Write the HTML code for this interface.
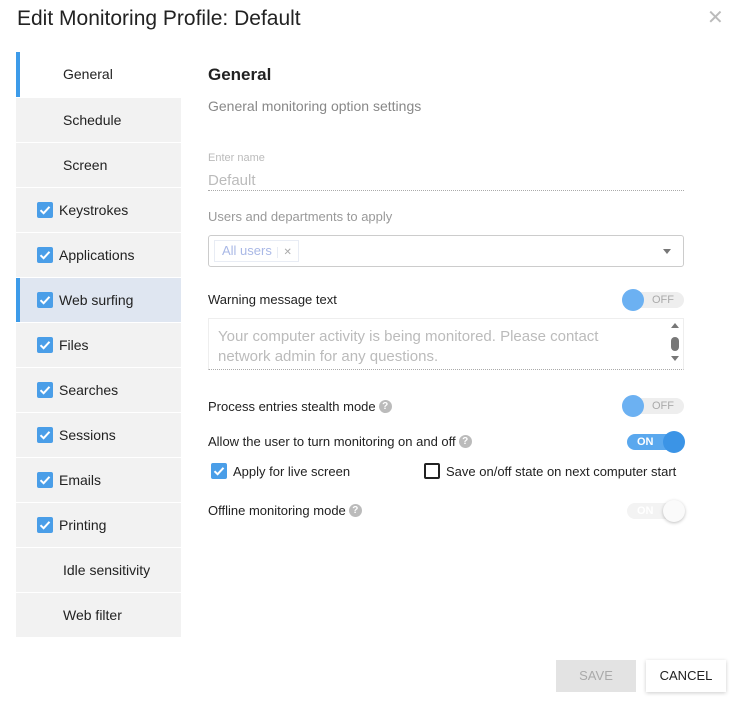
<!DOCTYPE html>
<html><head><meta charset="utf-8"><style>
*{box-sizing:border-box;margin:0;padding:0}
body{width:741px;height:709px;background:#fff;font-family:"Liberation Sans",sans-serif;color:#222;position:relative;overflow:hidden}
.abs{position:absolute}
.title{left:17px;top:7px;font-size:21px;color:#222}
.close{left:707px;top:5px;font-size:20px;color:#bbb;font-weight:300}
.item{position:absolute;left:16px;width:165px;height:44px;background:#f2f2f2;font-size:14px;line-height:44px;color:#222}
.item .t{position:absolute;left:47px}
.item .t2{position:absolute;left:43px}
.cb{position:absolute;left:21px;top:14px;width:16px;height:16px;background:#4a9ee8;border-radius:2px}
.cb svg{position:absolute;left:2px;top:2px}
.sel{background:#fff}
.bar{position:absolute;left:0;top:0;width:4px;height:45px;background:#3d9be9}
.lbl{font-size:13px;color:#222}
.help{display:inline-block;width:13px;height:13px;border-radius:50%;background:#bbb;color:#fff;font-size:10px;line-height:13px;text-align:center;font-weight:bold;vertical-align:middle;margin-left:3px;position:relative;top:-1px}
.tog{position:absolute;width:62px;height:16px;border-radius:8px}
.tog span{line-height:16px;top:0 !important}
.knob{position:absolute;width:22px;height:22px;border-radius:50%;top:-3px}
</style></head><body>
<div class="abs title">Edit Monitoring Profile: Default</div>
<div class="abs close">✕</div>

<div class="item sel" style="top:52px;height:45px"><div class="bar"></div><span class="t">General</span></div>
<div class="item" style="top:98px"><span class="t">Schedule</span></div>
<div class="item" style="top:143px"><span class="t">Screen</span></div>
<div class="item" style="top:188px"><div class="cb"><svg width="12" height="12" viewBox="0 0 12 12"><path d="M1.5 6.2 L4.6 9.2 L10.5 2.8" stroke="#fff" stroke-width="2" fill="none"/></svg></div><span class="t2">Keystrokes</span></div>
<div class="item" style="top:233px"><div class="cb"><svg width="12" height="12" viewBox="0 0 12 12"><path d="M1.5 6.2 L4.6 9.2 L10.5 2.8" stroke="#fff" stroke-width="2" fill="none"/></svg></div><span class="t2">Applications</span></div>
<div class="item" style="top:278px;background:#dfe6f1;height:44px"><div class="bar" style="height:44px"></div><div class="cb"><svg width="12" height="12" viewBox="0 0 12 12"><path d="M1.5 6.2 L4.6 9.2 L10.5 2.8" stroke="#fff" stroke-width="2" fill="none"/></svg></div><span class="t2">Web surfing</span></div>
<div class="item" style="top:323px"><div class="cb"><svg width="12" height="12" viewBox="0 0 12 12"><path d="M1.5 6.2 L4.6 9.2 L10.5 2.8" stroke="#fff" stroke-width="2" fill="none"/></svg></div><span class="t2">Files</span></div>
<div class="item" style="top:368px"><div class="cb"><svg width="12" height="12" viewBox="0 0 12 12"><path d="M1.5 6.2 L4.6 9.2 L10.5 2.8" stroke="#fff" stroke-width="2" fill="none"/></svg></div><span class="t2">Searches</span></div>
<div class="item" style="top:413px"><div class="cb"><svg width="12" height="12" viewBox="0 0 12 12"><path d="M1.5 6.2 L4.6 9.2 L10.5 2.8" stroke="#fff" stroke-width="2" fill="none"/></svg></div><span class="t2">Sessions</span></div>
<div class="item" style="top:458px"><div class="cb"><svg width="12" height="12" viewBox="0 0 12 12"><path d="M1.5 6.2 L4.6 9.2 L10.5 2.8" stroke="#fff" stroke-width="2" fill="none"/></svg></div><span class="t2">Emails</span></div>
<div class="item" style="top:503px"><div class="cb"><svg width="12" height="12" viewBox="0 0 12 12"><path d="M1.5 6.2 L4.6 9.2 L10.5 2.8" stroke="#fff" stroke-width="2" fill="none"/></svg></div><span class="t2">Printing</span></div>
<div class="item" style="top:548px"><span class="t">Idle sensitivity</span></div>
<div class="item" style="top:593px"><span class="t">Web filter</span></div>

<div class="abs" style="left:208px;top:65px;font-size:17px;font-weight:bold">General</div>
<div class="abs" style="left:208px;top:98px;font-size:14px;color:#888">General monitoring option settings</div>

<div class="abs" style="left:208px;top:152px;font-size:11px;color:#bbb">Enter name</div>
<div class="abs" style="left:208px;top:172px;font-size:15px;color:#bbb">Default</div>
<div class="abs" style="left:208px;top:190px;width:476px;border-top:1px dotted #aaa"></div>

<div class="abs" style="left:208px;top:209px;font-size:13px;color:#999">Users and departments to apply</div>
<div class="abs" style="left:208px;top:235px;width:476px;height:32px;border:1px solid #ccc;border-radius:3px">
 <div class="abs" style="left:5px;top:4px;height:22px;border:1px solid #e8ecf4;font-size:13px;color:#a9b8e6;line-height:20px;padding:0 6px 0 7px">All users <span style="border-left:1px solid #e8ecf4;padding-left:5px;margin-left:2px;font-size:10px;color:#aaa">✕</span></div>
 <div class="abs" style="right:12px;top:13px;width:0;height:0;border-left:4px solid transparent;border-right:4px solid transparent;border-top:5px solid #777"></div>
</div>

<div class="abs lbl" style="left:208px;top:292px">Warning message text</div>
<div class="tog" style="left:622px;top:292px;background:#eee"><span class="abs" style="left:30px;font-size:11px;color:#aaa">OFF</span><div class="knob" style="left:0;background:#6cb1f2"></div></div>
<div class="abs" style="left:208px;top:318px;width:476px;height:52px;border:1px solid #eee;border-bottom:1px dotted #aaa;font-size:15px;color:#bbb;line-height:20px;padding:8px 9px">Your computer activity is being monitored. Please contact<br>network admin for any questions.</div>
<div class="abs" style="left:671px;top:323px;width:0;height:0;border-left:4px solid transparent;border-right:4px solid transparent;border-bottom:5px solid #777"></div>
<div class="abs" style="left:671px;top:337px;width:8px;height:14px;border-radius:4px;background:#777"></div>
<div class="abs" style="left:671px;top:356px;width:0;height:0;border-left:4px solid transparent;border-right:4px solid transparent;border-top:5px solid #777"></div>

<div class="abs lbl" style="left:208px;top:399px">Process entries stealth mode<span class="help">?</span></div>
<div class="tog" style="left:622px;top:398px;background:#eee"><span class="abs" style="left:30px;font-size:11px;color:#aaa">OFF</span><div class="knob" style="left:0;background:#6cb1f2"></div></div>

<div class="abs lbl" style="left:208px;top:434px">Allow the user to turn monitoring on and off<span class="help">?</span></div>
<div class="tog" style="left:627px;top:434px;width:57px;background:#5aa8ee"><span class="abs" style="left:10px;font-size:11px;color:#fff;font-weight:bold">ON</span><div class="knob" style="left:36px;background:#3b94e6"></div></div>

<div class="abs" style="left:211px;top:463px;width:16px;height:16px;background:#4a9ee8;border-radius:2px"><svg class="abs" style="left:2px;top:2px" width="12" height="12" viewBox="0 0 12 12"><path d="M1.5 6.2 L4.6 9.2 L10.5 2.8" stroke="#fff" stroke-width="2" fill="none"/></svg></div>
<div class="abs" style="left:233px;top:464px;font-size:13px">Apply for live screen</div>
<div class="abs" style="left:424px;top:463px;width:16px;height:16px;border:2px solid #222;border-radius:2px"></div>
<div class="abs" style="left:446px;top:464px;font-size:13px">Save on/off state on next computer start</div>

<div class="abs lbl" style="left:208px;top:503px">Offline monitoring mode<span class="help">?</span></div>
<div class="tog" style="left:627px;top:503px;width:57px;background:#f3f3f3"><span class="abs" style="left:10px;font-size:11px;color:#fff;font-weight:bold">ON</span><div class="knob" style="left:36px;background:#fafafa;box-shadow:0 1px 3px rgba(0,0,0,.25)"></div></div>

<div class="abs" style="left:556px;top:660px;width:80px;height:32px;background:#e3e3e3;color:#aaa;font-size:13px;text-align:center;line-height:32px">SAVE</div>
<div class="abs" style="left:646px;top:660px;width:80px;height:32px;background:#fff;box-shadow:0 1px 4px rgba(0,0,0,.2);color:#222;font-size:13px;text-align:center;line-height:32px">CANCEL</div>
</body></html>
